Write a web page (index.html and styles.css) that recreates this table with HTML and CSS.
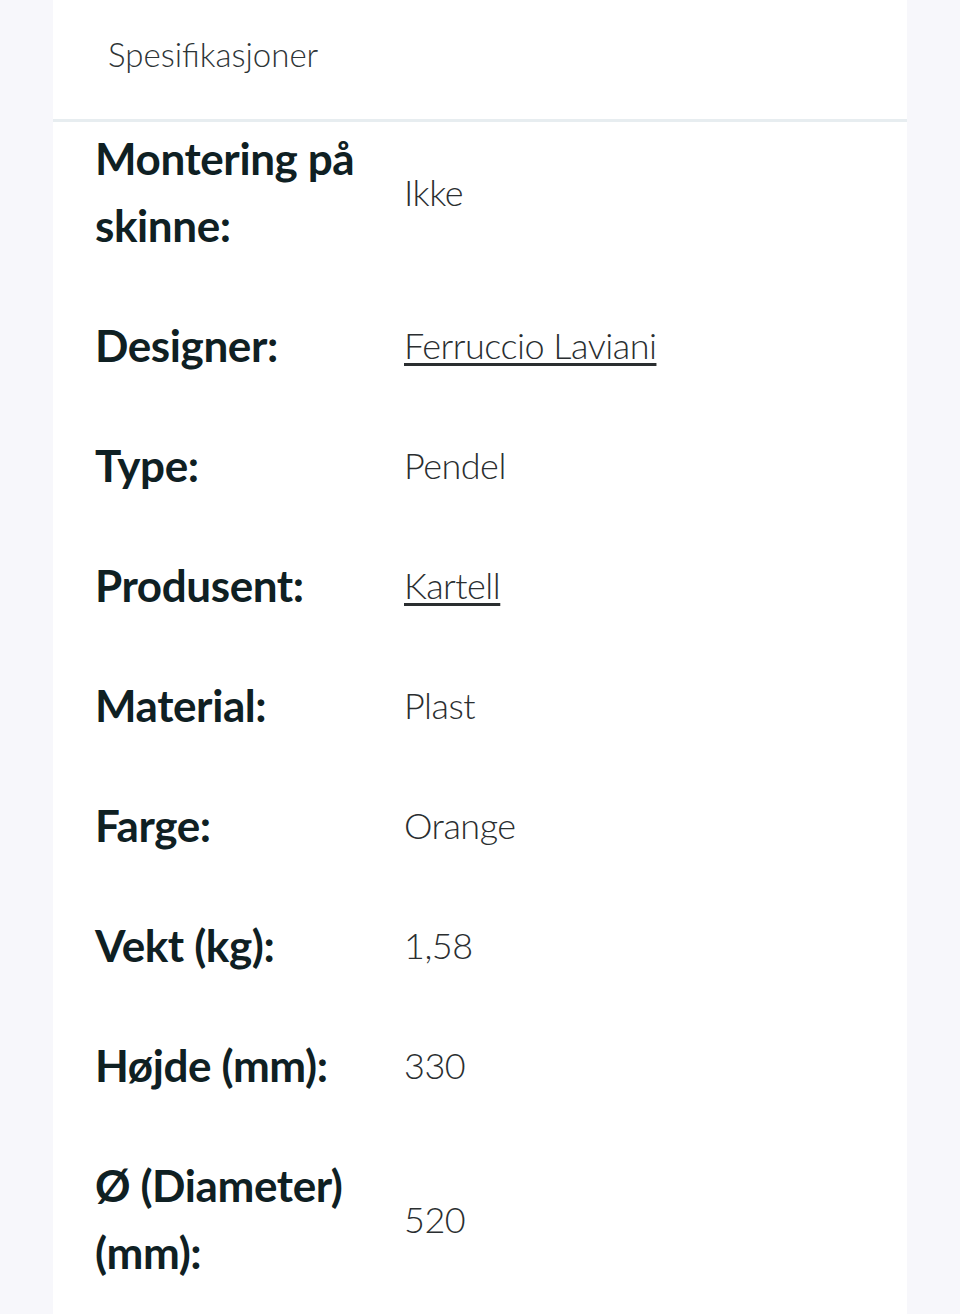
FILE: index.html
```html
<!DOCTYPE html>
<html lang="no">
<head>
<meta charset="utf-8">
<title>Spesifikasjoner</title>
<link rel="stylesheet" href="styles.css">
</head>
<body>
<main class="card">
  <header class="card-head">
    <h2 class="card-title">Spesifikasjoner</h2>
  </header>
  <dl class="specs">
    <div class="row"><dt>Montering på skinne:</dt><dd>Ikke</dd></div>
    <div class="row"><dt>Designer:</dt><dd><a href="#">Ferruccio Laviani</a></dd></div>
    <div class="row"><dt>Type:</dt><dd>Pendel</dd></div>
    <div class="row"><dt>Produsent:</dt><dd><a href="#">Kartell</a></dd></div>
    <div class="row"><dt>Material:</dt><dd>Plast</dd></div>
    <div class="row"><dt>Farge:</dt><dd>Orange</dd></div>
    <div class="row"><dt>Vekt (kg):</dt><dd>1,58</dd></div>
    <div class="row"><dt>Højde (mm):</dt><dd>330</dd></div>
    <div class="row"><dt>Ø (Diameter) (mm):</dt><dd>520</dd></div>
  </dl>
</main>
</body>
</html>
```
FILE: styles.css
```css
html, body {
  margin: 0;
  padding: 0;
  background: #f7f7fb;
}
body {
  font-family: "Lato", "Open Sans", "DejaVu Sans", sans-serif;
  color: #0f2023;
}
.card {
  margin: 0 53px;
  background: #fff;
  min-height: 1314px;
}
.card-head {
  height: 122px;
  box-sizing: border-box;
  padding: 31px 0 0 55px;
  border-bottom: 3px solid #e7edf0;
}
.card-title {
  margin: 0;
  font-size: 33px;
  font-weight: 300;
  color: #2d3436;
  line-height: 46px;
}
.specs {
  margin: 0;
  padding: 0 0 0 42px;
}
.row {
  display: flex;
  align-items: center;
  padding: 26px 0 27px;
}
.row:first-child { padding-top: 3px; }
dt {
  width: 309px;
  flex: none;
  font-size: 44px;
  font-weight: 700;
  letter-spacing: -0.4px;
  line-height: 67px;
  padding-right: 20px;
  box-sizing: border-box;
}
dd {
  margin: 0;
  font-size: 36px;
  font-weight: 300;
  letter-spacing: -0.5px;
  color: #2a2e30;
  line-height: 67px;
}
dd a {
  color: #2a2e30;
  text-decoration: underline;
  text-decoration-thickness: 3px;
  text-underline-offset: 4px;
}
```
